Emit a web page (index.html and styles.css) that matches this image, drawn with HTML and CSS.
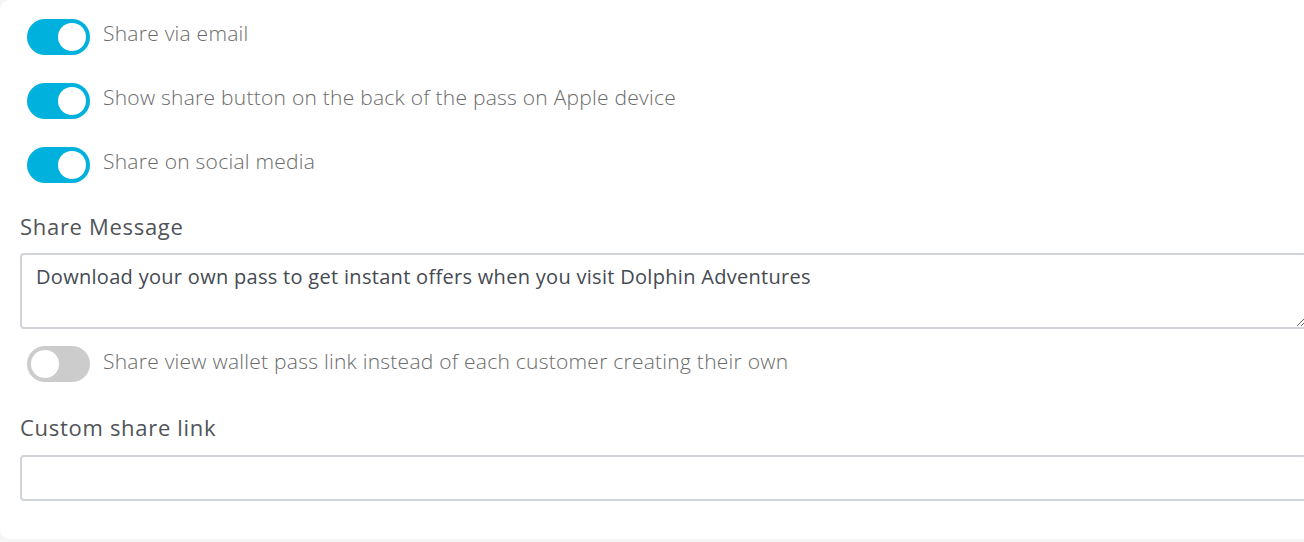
FILE: index.html
```html
<!DOCTYPE html>
<html>
<head>
<meta charset="utf-8">
<link rel="stylesheet" href="styles.css">
</head>
<body>
<div class="card">
  <div class="toggle-row">
    <span class="switch on"><span class="knob"></span></span>
    <span class="toggle-label">Share via email</span>
  </div>
  <div class="toggle-row">
    <span class="switch on"><span class="knob"></span></span>
    <span class="toggle-label">Show share button on the back of the pass on Apple device</span>
  </div>
  <div class="toggle-row">
    <span class="switch on"><span class="knob"></span></span>
    <span class="toggle-label">Share on social media</span>
  </div>
  <div class="field first">
    <label class="field-label">Share Message</label>
    <textarea class="textarea">Download your own pass to get instant offers when you visit Dolphin Adventures</textarea>
  </div>
  <div class="toggle-row single">
    <span class="switch off"><span class="knob"></span></span>
    <span class="toggle-label">Share view wallet pass link instead of each customer creating their own</span>
  </div>
  <div class="field second">
    <label class="field-label">Custom share link</label>
    <input class="input" type="text">
  </div>
</div>
</body>
</html>
```
FILE: styles.css
```css
html, body {
  margin: 0;
  padding: 0;
  background: #f6f6f7;
  overflow: hidden;
  width: 1304px;
  height: 542px;
}
.card {
  background: #ffffff;
  width: 1340px;
  height: 539px;
  box-sizing: border-box;
  border-radius: 10px;
  padding: 19px 0 0 20px;
  font-family: "Open Sans", sans-serif;
  display: flex;
  flex-direction: column;
}
.toggle-row {
  display: flex;
  align-items: flex-start;
  gap: 13px;
  padding-left: 7px;
  height: 36px;
  margin-bottom: 28px;
}
.toggle-row.single {
  margin-top: 17px;
  margin-bottom: 0;
}
.toggle-row.single .toggle-label { margin-top: -3px; }
.switch {
  width: 63px;
  height: 36px;
  border-radius: 18px;
  box-sizing: border-box;
  display: flex;
  align-items: center;
  padding: 0 4px;
  flex-shrink: 0;
}
.switch.on { background: #00b1dd; justify-content: flex-end; }
.switch.off { background: #cccccc; justify-content: flex-start; }
.knob {
  width: 28px;
  height: 28px;
  border-radius: 50%;
  background: #ffffff;
}
.toggle-label {
  font-size: 21px;
  font-weight: 300;
  line-height: 36px;
  letter-spacing: 0.25px;
  color: #6b6b6b;
  margin-top: -4px;
}
.field {
  display: flex;
  flex-direction: column;
}
.field.first { margin-top: 1px; }
.field.second { margin-top: 31px; }
.field-label {
  font-size: 22px;
  font-weight: 500;
  line-height: 28px;
  letter-spacing: 0.7px;
  color: #505459;
  margin-bottom: 13px;
}
.field.second .field-label { margin-bottom: 14px; }
.textarea {
  display: block;
  width: 1287px;
  height: 76px;
  box-sizing: border-box;
  border: 2px solid #d0d4d9;
  border-radius: 4px;
  padding: 9px 14px;
  margin: 0;
  font-family: "Open Sans", sans-serif;
  font-size: 20px;
  line-height: 26px;
  letter-spacing: 0.3px;
  color: #454a52;
  resize: vertical;
  outline: none;
}
.input {
  display: block;
  width: 1287px;
  height: 46px;
  box-sizing: border-box;
  border: 2px solid #d0d4d9;
  border-radius: 4px;
  margin: 0;
  outline: none;
}
```
